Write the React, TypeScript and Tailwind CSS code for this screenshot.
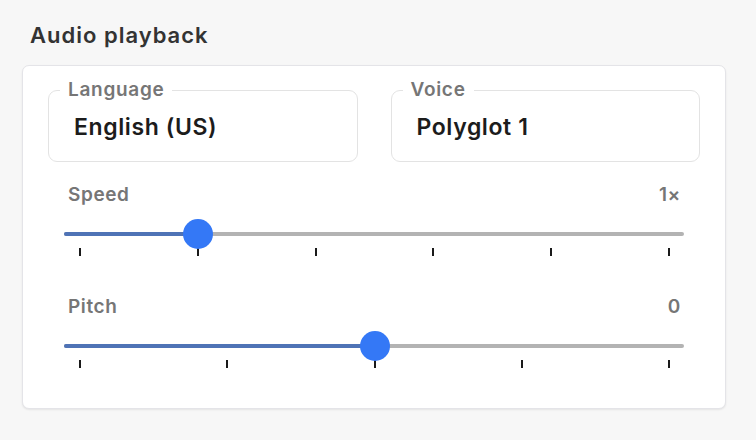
import React from "react";

type SliderProps = {
  label: string;
  value: string;
  fraction: number;
  ticks: number;
};

function Slider({ label, value, fraction, ticks }: SliderProps) {
  const range = 589;
  const center = 16 + fraction * range;
  return (
    <div className="flex flex-col">
      <div className="flex items-center justify-between pl-[4px] pr-[3px] h-[24px]">
        <span className="text-[19px] font-semibold tracking-[0.6px] text-[#767676]">{label}</span>
        <span className="text-[19px] font-semibold tracking-[0.6px] text-[#767676]">{value}</span>
      </div>
      <div className="relative mt-[11px] h-[30px]">
        <div className="absolute left-0 right-0 top-[14px] h-[4px] rounded-full bg-[#b3b3b3]" />
        <div
          className="absolute left-0 top-[14px] h-[4px] rounded-full bg-[#4f73b6]"
          style={{ width: `${center}px` }}
        />
        <div
          className="absolute top-[1px] h-[30px] w-[30px] rounded-full bg-[#3478f6]"
          style={{ left: `${center - 15}px` }}
        />
      </div>
      <div className="flex justify-between pl-[15px] pr-[14px]">
        {Array.from({ length: ticks }).map((_, i) => (
          <div key={i} className="h-[8px] w-[2px] bg-[#1a1a1a]" />
        ))}
      </div>
    </div>
  );
}

function Field({ label, value }: { label: string; value: string }) {
  return (
    <fieldset className="flex-1 rounded-[9px] border border-[#e3e3e3] pb-[20px]">
      <legend className="ml-[11px] px-[8px] text-[19px] font-semibold leading-[22px] tracking-[0.7px] text-[#767676]">
        {label}
      </legend>
      <div className="mt-[12px] pl-[25px] text-[23px] font-semibold leading-[28px] tracking-[0.6px] text-[#1c1c1c]">
        {value}
      </div>
    </fieldset>
  );
}

export default function App() {
  return (
    <div
      className="min-h-[440px] bg-[#f7f7f7] pl-[22px] pr-[30px] pt-[21px]"
      style={{ fontFamily: "Inter, 'Noto Sans', sans-serif" }}
    >
      <h2 className="ml-[8px] text-[22px] font-semibold leading-[28px] tracking-[1px] text-[#333333]">
        Audio playback
      </h2>
      <div className="mt-[16px] h-[344px] rounded-[7px] border border-[#e4e4e8] bg-white px-[25px] pt-[13px] shadow-[0_1px_2px_rgba(0,0,0,0.08)]">
        <div className="flex gap-[33px]">
          <Field label="Language" value="English (US)" />
          <Field label="Voice" value="Polyglot 1" />
        </div>
        <div className="mt-[21px] px-[16px]">
          <Slider label="Speed" value="1×" fraction={0.2} ticks={6} />
          <div className="mt-[39px]">
            <Slider label="Pitch" value="0" fraction={0.5} ticks={5} />
          </div>
        </div>
      </div>
    </div>
  );
}
